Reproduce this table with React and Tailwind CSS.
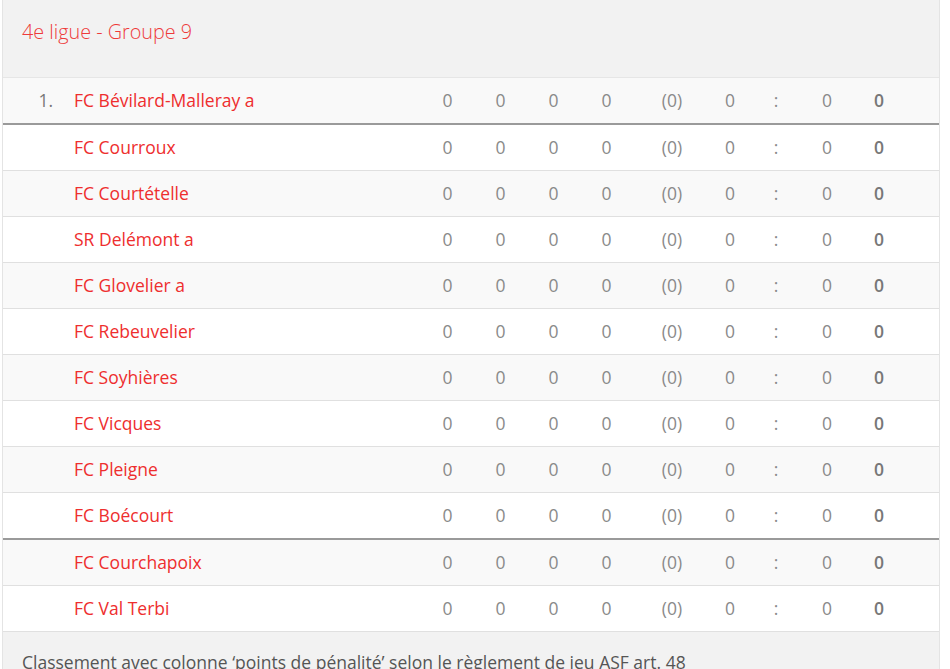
import React from "react";

const teams = [
  { rank: "1.", name: "FC Bévilard-Malleray a" },
  { rank: "", name: "FC Courroux" },
  { rank: "", name: "FC Courtételle" },
  { rank: "", name: "SR Delémont a" },
  { rank: "", name: "FC Glovelier a" },
  { rank: "", name: "FC Rebeuvelier" },
  { rank: "", name: "FC Soyhières" },
  { rank: "", name: "FC Vicques" },
  { rank: "", name: "FC Pleigne" },
  { rank: "", name: "FC Boécourt" },
  { rank: "", name: "FC Courchapoix" },
  { rank: "", name: "FC Val Terbi" },
];

// rows after which a heavy separator is drawn
const thick = [0, 9];

const cols =
  "grid grid-cols-[57px_361px_53px_53px_53px_53px_78px_38px_54px_48px_56px_1fr] items-center";

const App = () => {
  return (
    <div className="min-h-screen bg-white font-['Open_Sans',sans-serif]">
      <div className="ml-[2px] w-[938px] border-x border-[#e4e4e4] bg-[#f2f2f2]">
        {/* Header */}
        <div className="h-[78px] border-b border-[#e6e6e6] pl-[19px] pt-[18px]">
          <h2 className="text-[19.8px] font-light text-[#ee3a3a] leading-[28px]">
            4e ligue - Groupe 9
          </h2>
        </div>

        {/* Table rows */}
        <div>
          {teams.map((team, i) => (
            <div
              key={team.name}
              className={`${cols} text-[17.5px] ${
                i % 2 === 0 ? "bg-[#f9f9f9]" : "bg-white"
              } ${
                thick.includes(i)
                  ? "border-b-2 border-[#9a9a9a] h-[47px]"
                  : "border-b border-[#e0e0e0] h-[46px]"
              }`}
            >
              <div className="text-right pr-[7px] text-[#777]">{team.rank}</div>
              <div className="pl-[14px] text-[#ee2e2e]">{team.name}</div>
              <div className="text-center text-[#8a8a8a]">0</div>
              <div className="text-center text-[#8a8a8a]">0</div>
              <div className="text-center text-[#8a8a8a]">0</div>
              <div className="text-center text-[#8a8a8a]">0</div>
              <div className="text-center text-[#8a8a8a]">(0)</div>
              <div className="text-center text-[#8a8a8a]">0</div>
              <div className="text-center text-[#8a8a8a]">:</div>
              <div className="text-center text-[#8a8a8a]">0</div>
              <div className="text-center font-semibold text-[#777]">0</div>
              <div />
            </div>
          ))}
        </div>

        {/* Footer note */}
        <div className="pl-[19px] pt-[17px] pb-[20px] text-[17.5px] text-[#555]">
          Classement avec colonne ‘points de pénalité’ selon le règlement de jeu ASF art. 48
        </div>
      </div>
    </div>
  );
};

export default App;
